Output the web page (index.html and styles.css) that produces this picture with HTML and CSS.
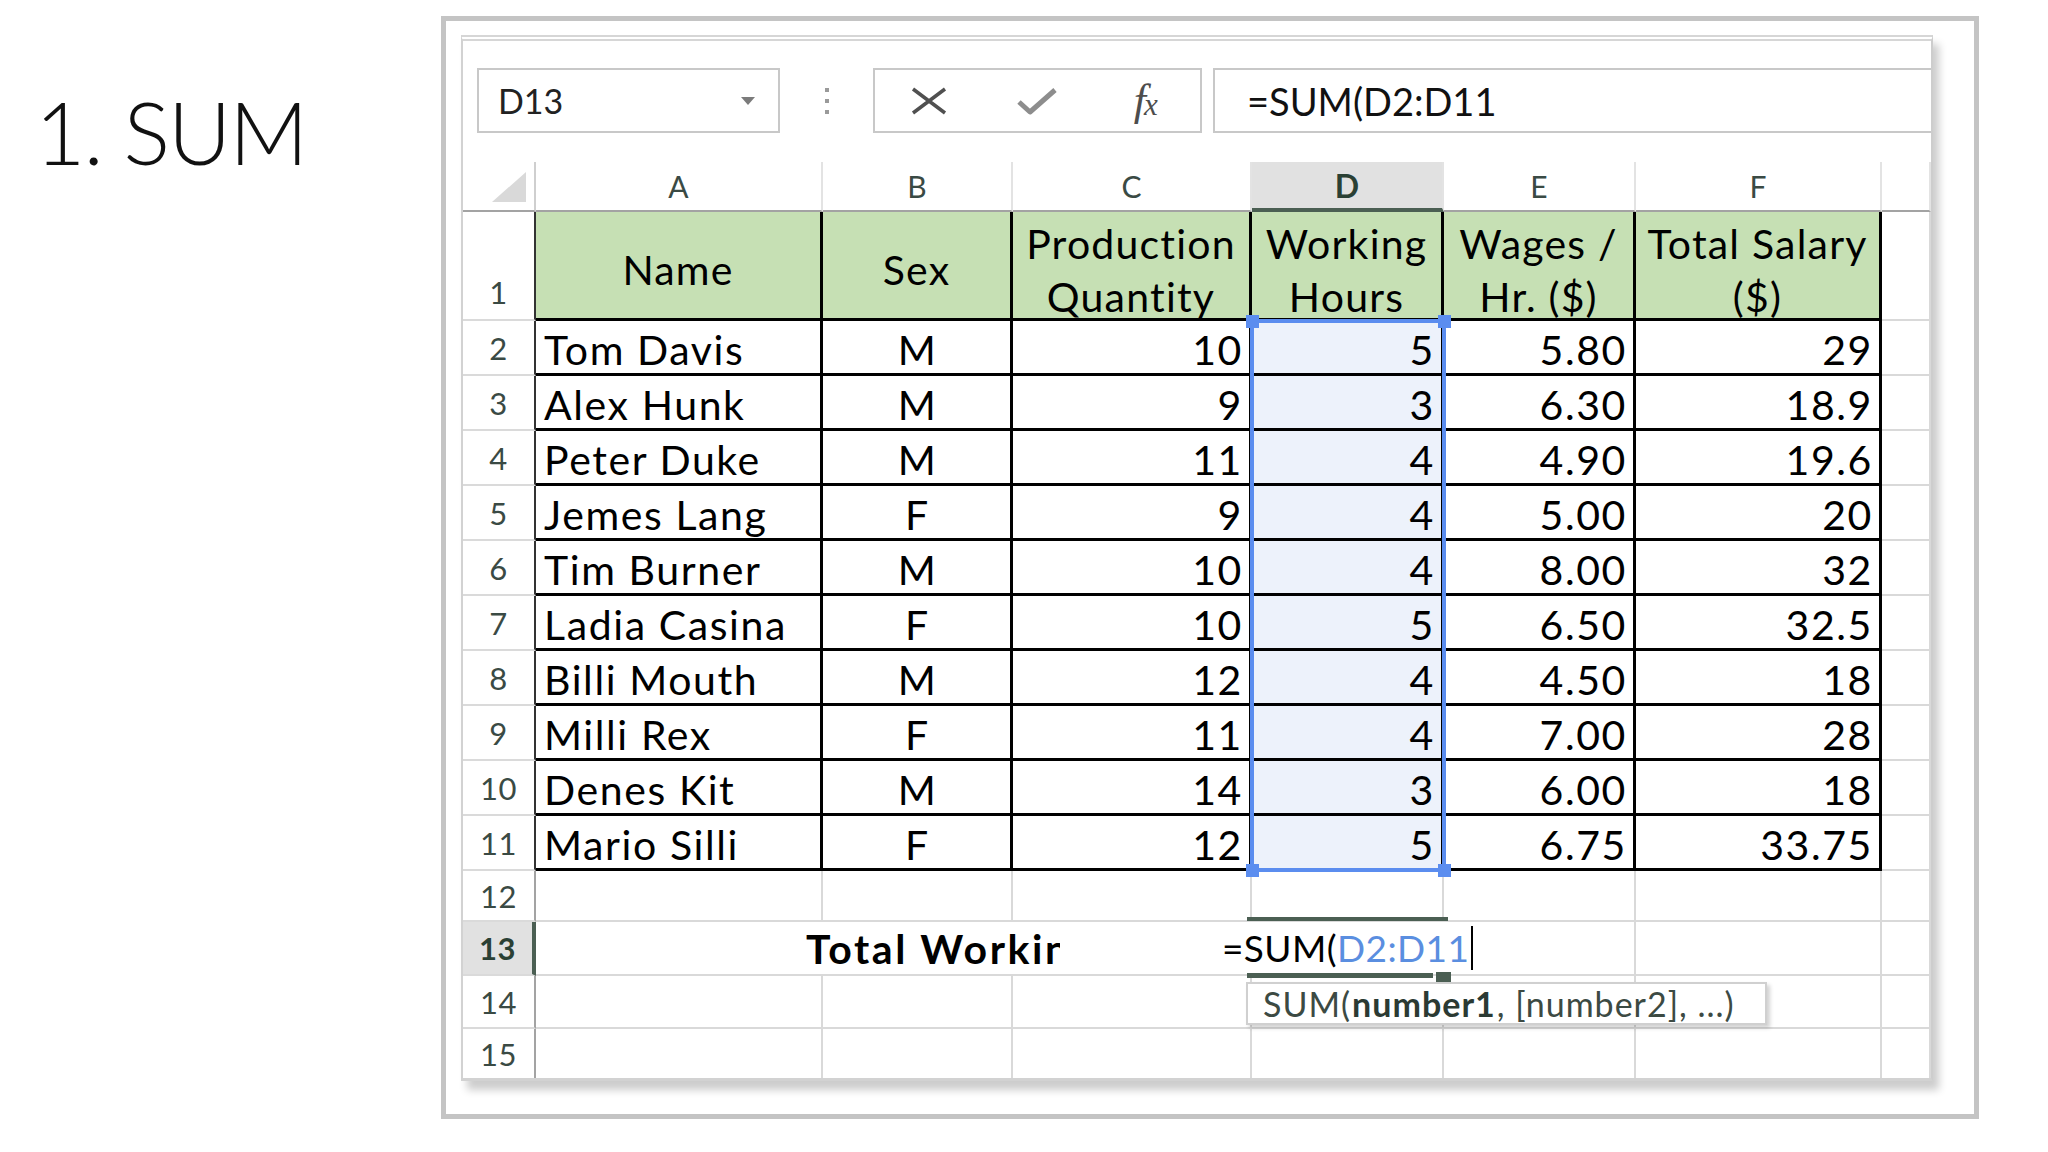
FILE: index.html
```html
<!DOCTYPE html>
<html lang="en">
<head>
<meta charset="utf-8">
<title>1. SUM</title>
<link rel="stylesheet" href="styles.css">
</head>
<body>
<div class="title-col"><h1 class="title">1. SUM</h1></div>
<div class="frame">
  <div class="sheet">
    <div class="fbar">
      <div class="namebox"><span>D13</span><i class="dd"></i></div>
      <div class="dots"><i></i><i></i><i></i></div>
      <div class="btns">
        <svg class="ico" width="40" height="30" viewBox="0 0 40 30"><path d="M4 3 L36 27 M36 3 L4 27" stroke="#505050" stroke-width="3.5" fill="none"/></svg>
        <svg class="ico" width="44" height="32" viewBox="0 0 44 32"><path d="M4 17 L15 27 L40 5" stroke="#8d8d8d" stroke-width="5" fill="none" stroke-linejoin="round"/></svg>
        <span class="fx"><i>f</i><i class="fxx">x</i></span>
      </div>
      <div class="fbox">=SUM(D2:D11</div>
    </div>
    <div class="grid">
      <div class="corner"><i class="tri"></i></div>
      <div class="ch">A</div><div class="ch">B</div><div class="ch">C</div><div class="ch sel">D</div><div class="ch">E</div><div class="ch">F</div><div class="ch"></div>

      <div class="rh tb b">1</div>
      <div class="t g">Name</div><div class="t g">Sex</div><div class="t g">Production<br>Quantity</div><div class="t g">Working<br>Hours</div><div class="t g">Wages /<br>Hr. ($)</div><div class="t g">Total Salary<br>($)</div><div class="c"></div>

      <div class="rh tb">2</div><div class="t l">Tom Davis</div><div class="t m">M</div><div class="t r">10</div><div class="t r sd">5</div><div class="t r">5.80</div><div class="t r">29</div><div class="c"></div>
      <div class="rh tb">3</div><div class="t l">Alex Hunk</div><div class="t m">M</div><div class="t r">9</div><div class="t r sd">3</div><div class="t r">6.30</div><div class="t r">18.9</div><div class="c"></div>
      <div class="rh tb">4</div><div class="t l">Peter Duke</div><div class="t m">M</div><div class="t r">11</div><div class="t r sd">4</div><div class="t r">4.90</div><div class="t r">19.6</div><div class="c"></div>
      <div class="rh tb">5</div><div class="t l">Jemes Lang</div><div class="t m">F</div><div class="t r">9</div><div class="t r sd">4</div><div class="t r">5.00</div><div class="t r">20</div><div class="c"></div>
      <div class="rh tb">6</div><div class="t l">Tim Burner</div><div class="t m">M</div><div class="t r">10</div><div class="t r sd">4</div><div class="t r">8.00</div><div class="t r">32</div><div class="c"></div>
      <div class="rh tb">7</div><div class="t l">Ladia Casina</div><div class="t m">F</div><div class="t r">10</div><div class="t r sd">5</div><div class="t r">6.50</div><div class="t r">32.5</div><div class="c"></div>
      <div class="rh tb">8</div><div class="t l">Billi Mouth</div><div class="t m">M</div><div class="t r">12</div><div class="t r sd">4</div><div class="t r">4.50</div><div class="t r">18</div><div class="c"></div>
      <div class="rh tb">9</div><div class="t l">Milli Rex</div><div class="t m">F</div><div class="t r">11</div><div class="t r sd">4</div><div class="t r">7.00</div><div class="t r">28</div><div class="c"></div>
      <div class="rh tb">10</div><div class="t l">Denes Kit</div><div class="t m">M</div><div class="t r">14</div><div class="t r sd">3</div><div class="t r">6.00</div><div class="t r">18</div><div class="c"></div>
      <div class="rh tb">11</div><div class="t l">Mario Silli</div><div class="t m">F</div><div class="t r">12</div><div class="t r sd">5</div><div class="t r">6.75</div><div class="t r">33.75</div><div class="c"></div>

      <div class="rh">12</div><div class="c"></div><div class="c"></div><div class="c"></div><div class="c"></div><div class="c"></div><div class="c"></div><div class="c"></div>
      <div class="rh sel">13</div>
      <div class="r13"><span class="clip">Total Working Hours</span><span class="edit">=SUM(<span class="blue">D2:D11</span></span></div>
      <div class="c"></div><div class="c"></div>
      <div class="rh">14</div><div class="c"></div><div class="c"></div><div class="c"></div><div class="c"></div><div class="c"></div><div class="c"></div><div class="c"></div>
      <div class="rh last">15</div><div class="c last"></div><div class="c last"></div><div class="c last"></div><div class="c last"></div><div class="c last"></div><div class="c last"></div><div class="c last"></div>

      <div class="selbox"><i class="h tl"></i><i class="h tr"></i><i class="h bl"></i><i class="h br"></i></div>
      <div class="act-top"></div>
      <div class="act-bot"></div>
      <div class="act-h"></div>
      <div class="tip">SUM(<b>number1</b>, [number2], ...)</div>
    </div>
  </div>
</div>
</body>
</html>
```
FILE: styles.css
```css
html, body {
  margin: 0;
  padding: 0;
}
body {
  width: 2048px;
  height: 1152px;
  overflow: hidden;
  background: #fff;
  display: flex;
  align-items: flex-start;
  font-family: Lato, "Open Sans", sans-serif;
}
.title-col {
  flex: 0 0 441px;
  box-sizing: border-box;
  padding-left: 35px;
}
.title {
  margin: 88px 0 0;
  font-family: Lato, sans-serif;
  font-weight: 300;
  font-size: 87px;
  letter-spacing: -2px;
  line-height: 1;
  color: #111;
  white-space: nowrap;
}
.frame {
  margin-top: 16px;
  width: 1538px;
  height: 1103px;
  box-sizing: border-box;
  border: 5px solid #c4c4c4;
  padding: 14px 0 0 15px;
}
.sheet {
  width: 1472px;
  box-sizing: border-box;
  border-left: 2px solid #d2d2d2;
  border-right: 2px solid #cdcdcd;
  border-top: 6px double #d6d6d6;
  border-bottom: 3px solid #d2d2d2;
  box-shadow: 6px 9px 8px rgba(0, 0, 0, 0.2);
  background: #fff;
}
.fbar {
  display: flex;
  align-items: stretch;
  height: 65px;
  margin-top: 27px;
  margin-bottom: 29px;
  padding-left: 14px;
}
.namebox {
  width: 303px;
  box-sizing: border-box;
  border: 2px solid #c8c8c8;
  display: flex;
  align-items: center;
  padding-left: 19px;
  font-size: 34px;
  color: #222;
}
.dd {
  margin-left: auto;
  margin-right: 23px;
  width: 0;
  height: 0;
  border-left: 7px solid transparent;
  border-right: 7px solid transparent;
  border-top: 8px solid #7b7b7b;
}
.dots {
  width: 93px;
  display: flex;
  flex-direction: column;
  align-items: center;
  justify-content: center;
  gap: 7px;
}
.dots i {
  display: block;
  width: 4px;
  height: 4px;
  background: #9a9a9a;
}
.btns {
  width: 329px;
  box-sizing: border-box;
  border: 2px solid #c8c8c8;
  display: grid;
  grid-template-columns: repeat(3, 1fr);
  align-items: center;
  justify-items: center;
}
.ico {
  display: block;
}
.fx {
  font-family: "Liberation Serif", serif;
  font-style: italic;
  color: #4d4d4d;
  line-height: 1;
}
.fx i {
  font-size: 44px;
}
.fx .fxx {
  font-size: 31px;
  margin-left: -2px;
}
.fbox {
  flex: 1;
  margin-left: 11px;
  border: 2px solid #c8c8c8;
  border-right: 0;
  display: flex;
  align-items: center;
  padding-left: 32px;
  font-size: 38px;
  color: #111;
}
.grid {
  position: relative;
  display: grid;
  grid-template-columns: 73px 287px 190px 239px 192px 192px 246px 49px;
  grid-template-rows: 50px 109px repeat(10, 55px) 51px 54px 53px 49px;
  font-size: 41px;
  letter-spacing: 1.6px;
  color: #000;
}
.grid > div {
  box-sizing: border-box;
  display: flex;
  align-items: center;
  overflow: hidden;
  white-space: nowrap;
}
.corner {
  border-right: 2px solid #cfcfcf;
  border-bottom: 2px solid #a3a3a3;
  justify-content: flex-end;
  align-items: flex-end !important;
  padding: 0 8px 8px 0;
}
.tri {
  display: block;
  width: 34px;
  height: 30px;
  background: #d9d9d9;
  clip-path: polygon(100% 0, 100% 100%, 0 100%);
}
.ch {
  justify-content: center;
  border-right: 2px solid #e3e3e3;
  border-bottom: 2px solid #a3a3a3;
  font-size: 30px;
  letter-spacing: 0;
  color: #3a4a44;
}
.ch.sel {
  background: #e1e1e1;
  border-bottom: 4px solid #4b5f53;
  font-weight: 700;
  font-size: 32px;
  color: #2a4034;
}
.rh {
  justify-content: center;
  border-right: 2px solid #a3a3a3;
  border-bottom: 2px solid #dadada;
  font-size: 31px;
  letter-spacing: 0.5px;
  color: #3a4a44;
}
.rh.tb {
  border-right-color: #333;
}
.rh.b {
  align-items: flex-end !important;
  padding-bottom: 8px;
}
.rh.sel {
  background: #e1e1e1;
  border-right: 4px solid #4b5f53;
  font-weight: 700;
  color: #2a4034;
}
.c {
  border-right: 2px solid #d9d9d9;
  border-bottom: 2px solid #d9d9d9;
}
.last {
  border-bottom: 0 !important;
}
.t {
  border-right: 3px solid #000;
  border-bottom: 3px solid #000;
  padding: 4px 6px 0 8px;
}
.g {
  background: #c6e0b4;
  justify-content: center;
  text-align: center;
  line-height: 53px;
  letter-spacing: 1.2px;
  padding: 9px 0 0 0;
}
.l { justify-content: flex-start; }
.m { justify-content: center; }
.r { justify-content: flex-end; }
.sd { background: #edf2fb; }
.r13 {
  grid-column: span 5;
  border-right: 2px solid #d9d9d9;
  border-bottom: 2px solid #d9d9d9;
  padding-left: 270px;
}
.clip {
  flex: none;
  width: 254px;
  overflow: hidden;
  font-weight: 700;
  font-size: 41px;
  letter-spacing: 2.6px;
}
.edit {
  margin-left: 162px;
  padding-right: 2px;
  border-right: 2px solid #000;
  line-height: 44px;
  font-size: 37px;
  letter-spacing: 0.4px;
}
.blue { color: #5a8ee0; }
.selbox {
  position: absolute;
  left: 787px;
  top: 157px;
  width: 196px;
  height: 553px;
  box-sizing: border-box;
  border: 4px solid #5b8def;
  overflow: visible !important;
}
.h {
  position: absolute;
  width: 13px;
  height: 13px;
  background: #5b8def;
}
.h.tl { left: -8.5px; top: -8.5px; }
.h.tr { right: -8.5px; top: -8.5px; }
.h.bl { left: -8.5px; bottom: -8.5px; }
.h.br { right: -8.5px; bottom: -8.5px; }
.act-top {
  position: absolute;
  left: 784px;
  top: 755px;
  width: 201px;
  height: 4px;
  background: #4b5f53;
}
.act-bot {
  position: absolute;
  left: 784px;
  top: 811px;
  width: 186px;
  height: 5px;
  background: #4b5f53;
}
.act-h {
  position: absolute;
  left: 973px;
  top: 810px;
  width: 15px;
  height: 10px;
  background: #4b5f53;
}
.tip {
  position: absolute;
  left: 783px;
  top: 820px;
  width: 521px;
  height: 43px;
  box-sizing: border-box;
  border: 2px solid #d0d0d0;
  background: #fff;
  box-shadow: 3px 3px 4px rgba(0, 0, 0, 0.18);
  padding-left: 15px;
  font-size: 34px;
  letter-spacing: 1px;
  color: #3c4a43;
}
.tip b {
  color: #2b3a33;
  margin: 0 1px;
}
```
